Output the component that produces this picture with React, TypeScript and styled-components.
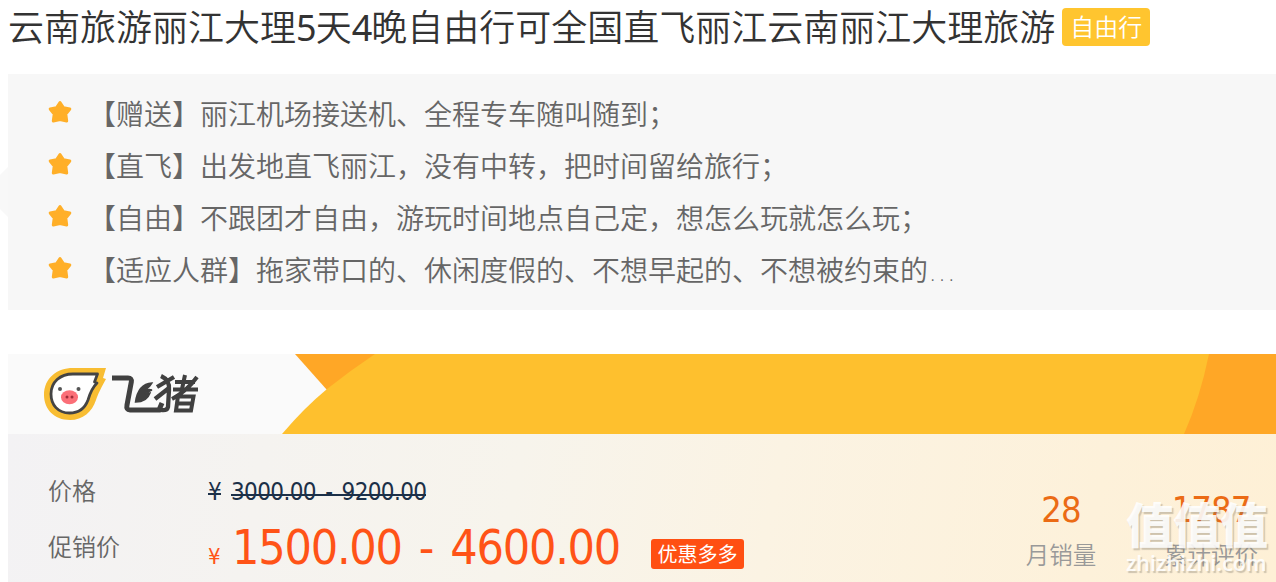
import React from 'react'

import styled, { createGlobalStyle } from 'styled-components'

const GlobalStyle = createGlobalStyle`
  * {
    box-sizing: border-box;
  }

  body {
    margin: 0;
    overflow: hidden;
    background: #fff;
    font-family: 'DejaVu Sans Condensed', 'Noto Sans CJK SC', sans-serif;
    color: #666;
  }
`

const Page = styled.main`
  width: 1276px;
  height: 582px;
  padding-left: 8px;
  overflow: hidden;
`

const TitleRow = styled.header`
  display: flex;
  height: 74px;
`

const Title = styled.h1`
  margin: 0;
  padding-top: 1px;
  font-size: 36px;
  line-height: 54px;
  font-weight: 350;
  color: #333;
  white-space: nowrap;
`

const Digit = styled.span`
  font-family: 'Noto Sans', sans-serif;
  font-weight: 400;
  letter-spacing: -0.026em;
`

const TypeTag = styled.span`
  width: 88px;
  height: 38px;
  margin: 8px 0 0 7px;
  border-radius: 4px;
  background: #ffc52f;
  color: #fff;
  font-size: 24px;
  line-height: 40px;
  font-weight: 350;
  text-align: center;
`

const Highlights = styled.ul`
  position: relative;
  height: 236px;
  margin: 0 0 44px;
  padding: 14px 0 14px 40px;
  list-style: none;
  background: #f7f7f7;
`

const Notch = styled.svg`
  position: absolute;
  left: -8px;
  top: 93px;
`

const Highlight = styled.li`
  display: flex;
  height: 52px;
  font-family: 'DejaVu Sans', 'Noto Sans CJK SC', sans-serif;
  font-size: 28px;
  line-height: 55px;
  font-weight: 350;
  white-space: nowrap;

  svg {
    margin: 11px 15px 0 -1px;
  }
`

const Banner = styled.div`
  display: flex;
  height: 80px;
  background: #fafafa;
`

const Panel = styled.section`
  display: flex;
  justify-content: space-between;
  height: 148px;
  background: linear-gradient(100deg, #f3f2f4 0%, #f7f4ec 40%, #fbf3e3 60%, #fdf1da 85%, #fef0d6 100%);
`

const Prices = styled.dl`
  margin: 0;
  padding: 30px 0 0 40px;
`

const PriceRow = styled.div`
  display: flex;
  height: 56px;
  line-height: 56px;
`

const Label = styled.dt`
  width: 160px;
  font-size: 24px;
  line-height: 57px;
  font-weight: 350;
`

const Price = styled.dd<{ $old?: boolean }>`
  display: flex;
  align-items: baseline;
  margin: ${({ $old }) => ($old ? 0 : -1)}px 0 0;
  font-size: ${({ $old }) => ($old ? 24 : 48)}px;
  letter-spacing: -0.026em;
  word-spacing: ${({ $old }) => ($old ? 3 : 4.6)}px;
  color: ${({ $old }) => ($old ? '#1c3048' : '#ff5317')};
`

const Yen = styled.span<{ $old?: boolean }>`
  width: ${({ $old }) => ($old ? 23 : 24)}px;
  font-size: ${({ $old }) => ($old ? 24 : 22)}px;
`

const Strike = styled.span`
  background: linear-gradient(currentColor, currentColor) 0 56% / 100% 2px no-repeat;
`

const Deal = styled.span`
  align-self: flex-start;
  width: 93px;
  height: 30px;
  margin: 20px 0 0 31px;
  border-radius: 3px;
  background: #ff4f12;
  color: #fff;
  font-size: 20px;
  line-height: 33px;
  letter-spacing: 0;
  text-align: center;
`

const Stats = styled.div`
  position: relative;
  display: flex;
  padding-top: 52px;
`

const Stat = styled.div<{ $width: number; $indent?: number }>`
  width: ${({ $width }) => $width}px;
  padding-left: ${({ $indent = 0 }) => $indent}px;
  text-align: center;
`

const Count = styled.div`
  height: 47px;
  font-size: 36px;
  line-height: 47px;
  letter-spacing: -0.026em;
  color: #eb6b15;
`

const StatLabel = styled.div`
  font-size: 23.5px;
  line-height: 47px;
  font-weight: 350;
  color: #999;
`

const Watermark = styled.div`
  position: absolute;
  right: 5px;
  top: 65px;
  width: 145px;
  color: rgba(255, 255, 255, 0.9);
  text-shadow: 1.5px 1.5px 1px rgba(130, 120, 105, 0.38);
  white-space: nowrap;
`

const WatermarkMark = styled.div`
  height: 53px;
  font-size: 48px;
  line-height: 54px;
  letter-spacing: -1px;
  font-weight: 900;
`

const WatermarkSite = styled.div`
  font-family: 'Open Sans', sans-serif;
  font-size: 21.6px;
  line-height: 22px;
  font-weight: 600;
`

const highlights = [
  '【赠送】丽江机场接送机、全程专车随叫随到；',
  '【直飞】出发地直飞丽江，没有中转，把时间留给旅行；',
  '【自由】不跟团才自由，游玩时间地点自己定，想怎么玩就怎么玩；',
  '【适应人群】拖家带口的、休闲度假的、不想早起的、不想被约束的…',
]

function Star() {
  return (
    <svg width="26" height="26" viewBox="0 0 26 26">
      <path
        d="M13 3.500L16.500 8.800L22.800 10L18.800 15.200L19.700 22L13 20.600L6.300 22L7.200 15.200L3.200 10L9.500 8.800Z"
        fill="#ffaf28"
        stroke="#ffaf28"
        strokeWidth="3"
        strokeLinejoin="round"
      />
    </svg>
  )
}

function BannerArt() {
  return (
    <svg width="1268" height="80" viewBox="8 354 1268 80">
      <path d="M295 354H385L327 390Z" fill="#ffa726" />
      <path d="M282 434Q304 408 327 389Q351 370 375 354H1276V434Z" fill="#fec02e" />
      <path d="M1209 354Q1200 398 1184 434H1276V354Z" fill="#ffa726" />
      {/* pig mascot */}
      <path
        d="M106 368L103 378L106 379C101 388 98 394 96 400C92 412 83 420 70 420C54 420 44 409 44 395C44 378 57 368 73 368Z"
        fill="#f8bd32"
      />
      <path
        d="M97.500 374L94.500 382L97 383C92 388 90 393 88 400C85 408 79 413 69.500 413C58 413 51 405 51 394C51 382 60 374 73 374Z"
        fill="#fff"
        stroke="#444"
        strokeWidth="2.800"
        strokeLinejoin="round"
      />
      <ellipse cx="69.500" cy="397.300" rx="8.500" ry="7" fill="#fb6f78" />
      <circle cx="60" cy="389" r="2" fill="#555" />
      <circle cx="78.500" cy="389" r="2" fill="#555" />
      <circle cx="67" cy="397" r="1.500" fill="#a02c38" />
      <circle cx="72" cy="397" r="1.500" fill="#a02c38" />
      {/* wordmark */}
      <g fill="none" stroke="#404040" strokeWidth="5">
        <path d="M112 378H128Q132 378 131.300 382L127 405Q126 410 130 410H159L162 403" />
        <path
          d="M152 383Q138 384 135.500 402Q147 402 150 393L145 394Q149 391 152 390L146 389Q150 387 152 383Z"
          fill="#404040"
          strokeWidth="1.500"
        />
        <path d="M174 377L157 387M161 376Q170 380 169 390L168 407Q167 411 161 410M169 388L155 399" strokeWidth="4.300" />
        <path d="M175 382H195M185 375L182 389M173 389.500H198M197 377Q187 391 172 399M178 396.500H193.500L191 410.500H176L178 396M178 403.500H192" strokeWidth="4" />
      </g>
    </svg>
  )
}

export default function App() {
  return (
    <Page>
      <GlobalStyle />
      <TitleRow>
        <Title>
          云南旅游丽江大理<Digit>5</Digit>天<Digit>4</Digit>晚自由行可全国直飞丽江云南丽江大理旅游
        </Title>
        <TypeTag>自由行</TypeTag>
      </TitleRow>
      <Highlights>
        <Notch width="8" height="50" viewBox="0 0 8 50">
          <path d="M8 0L0 8V42L8 50Z" fill="#f8f8f8" />
        </Notch>
        {highlights.map((text) => (
          <Highlight key={text}>
            <Star />
            {text}
          </Highlight>
        ))}
      </Highlights>
      <Banner>
        <BannerArt />
      </Banner>
      <Panel>
        <Prices>
          <PriceRow>
            <Label>价格</Label>
            <Price $old>
              <Yen $old>
                <Strike>¥</Strike>
              </Yen>
              <Strike>3000.00 - 9200.00</Strike>
            </Price>
          </PriceRow>
          <PriceRow>
            <Label>促销价</Label>
            <Price>
              <Yen>¥</Yen>
              1500.00 - 4600.00
              <Deal>优惠多多</Deal>
            </Price>
          </PriceRow>
        </Prices>
        <Stats>
          <Stat $width={110}>
            <Count>28</Count>
            <StatLabel>月销量</StatLabel>
          </Stat>
          <Stat $width={160} $indent={30}>
            <Count>1787</Count>
            <StatLabel>累计评价</StatLabel>
          </Stat>
          <Watermark>
            <WatermarkMark>值值值</WatermarkMark>
            <WatermarkSite>zhizhizhi.com</WatermarkSite>
          </Watermark>
        </Stats>
      </Panel>
    </Page>
  )
}
